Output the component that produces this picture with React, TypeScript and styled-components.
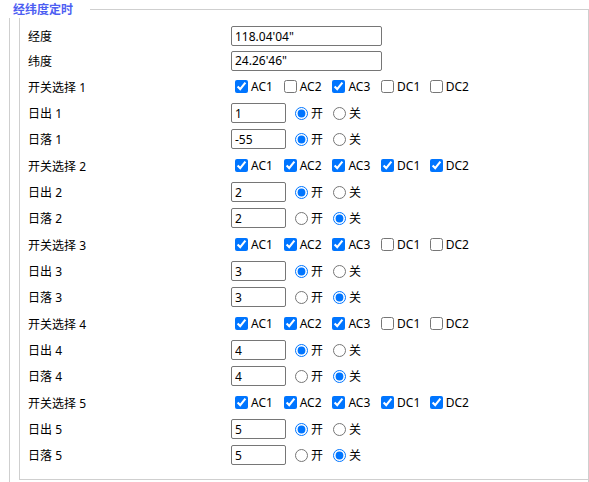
import React from "react";
import styled, { createGlobalStyle } from "styled-components";

const GlobalStyle = createGlobalStyle`
  body {
    margin: 0;
    background: #fff;
    overflow: hidden;
    font-family: "Noto Sans", "Noto Sans CJK SC", sans-serif;
    font-size: 12px;
    color: #000;
  }
`;

const Page = styled.div`
  margin-left: 9px;
  width: 580px;
`;
const Header = styled.div`
  display: flex;
  height: 18px;
`;
const Legend = styled.div`
  width: 81px;
  padding-left: 4px;
  box-sizing: border-box;
  line-height: 19px;
  font-size: 12px;
  font-weight: 700;
  color: #4d5ef2;
`;
const HeaderLine = styled.div`
  flex: 1;
  margin-top: 9px;
  border-top: 1px solid #cfcfcf;
  border-right: 1px solid #cfcfcf;
`;
const Frame = styled.div`
  border-left: 1px solid #cfcfcf;
  border-right: 1px solid #cfcfcf;
  padding-left: 9px;
  padding-bottom: 2px;
`;
const Panel = styled.div`
  border-left: 1px solid #cfcfcf;
  border-bottom: 1px solid #cfcfcf;
  padding: 6px 0 11px 8px;
`;
const Row = styled.div<{ $h: number }>`
  display: flex;
  align-items: center;
  height: ${(p) => p.$h}px;
`;
const Label = styled.div`
  width: 203px;
  white-space: nowrap;
`;
const TextInput = styled.input<{ $wide?: boolean }>`
  width: ${(p) => (p.$wide ? 151 : 55)}px;
  height: 20px;
  box-sizing: border-box;
  margin: 0;
  padding: 0 3px;
  border: 1px solid #767676;
  border-radius: 2px;
  font-family: "Noto Sans", "Noto Sans CJK SC", sans-serif;
  font-size: 12px;
  color: #000;
  outline: none;
`;
const Checks = styled.div`
  display: flex;
`;
const CheckItem = styled.label`
  width: 48.7px;
  display: flex;
  align-items: center;
  white-space: nowrap;
`;
const Box = styled.input`
  width: 13px;
  height: 13px;
  margin: 0 3px 0 4px;
`;
const Radios = styled.div`
  display: flex;
  margin-left: 4px;
`;
const RadioItem = styled.label`
  width: 38px;
  display: flex;
  align-items: center;
`;
const Dot = styled.input`
  width: 13px;
  height: 13px;
  margin: 0 3px 0 5px;
`;

const channels = ["AC1", "AC2", "AC3", "DC1", "DC2"];

const groups = [
  { sw: [1, 0, 1, 0, 0], rise: "1", set: "-55", setOn: true },
  { sw: [1, 1, 1, 1, 1], rise: "2", set: "2", setOn: false },
  { sw: [1, 1, 1, 0, 0], rise: "3", set: "3", setOn: false },
  { sw: [1, 1, 1, 0, 0], rise: "4", set: "4", setOn: false },
  { sw: [1, 1, 1, 1, 1], rise: "5", set: "5", setOn: false },
];

const OnOff = ({ name, on }: { name: string; on: boolean }) => (
  <Radios>
    <RadioItem>
      <Dot type="radio" name={name} defaultChecked={on} />开
    </RadioItem>
    <RadioItem>
      <Dot type="radio" name={name} defaultChecked={!on} />关
    </RadioItem>
  </Radios>
);

const App = () => {
  return (
    <Page>
      <GlobalStyle />
      <Header>
        <Legend>经纬度定时</Legend>
        <HeaderLine />
      </Header>
      <Frame>
        <Panel>
          <Row $h={24}>
            <Label>经度</Label>
            <TextInput $wide defaultValue={`118.04'04"`} />
          </Row>
          <Row $h={25}>
            <Label>纬度</Label>
            <TextInput $wide defaultValue={`24.26'46"`} />
          </Row>
          {groups.map((g, i) => (
            <React.Fragment key={i}>
              <Row $h={27}>
                <Label>开关选择 {i + 1}</Label>
                <Checks>
                  {channels.map((c, j) => (
                    <CheckItem key={c}>
                      <Box type="checkbox" defaultChecked={!!g.sw[j]} />
                      {c}
                    </CheckItem>
                  ))}
                </Checks>
              </Row>
              <Row $h={26}>
                <Label>日出 {i + 1}</Label>
                <TextInput defaultValue={g.rise} />
                <OnOff name={`rise${i}`} on />
              </Row>
              <Row $h={26}>
                <Label>日落 {i + 1}</Label>
                <TextInput defaultValue={g.set} />
                <OnOff name={`set${i}`} on={g.setOn} />
              </Row>
            </React.Fragment>
          ))}
        </Panel>
      </Frame>
    </Page>
  );
};

export default App;
